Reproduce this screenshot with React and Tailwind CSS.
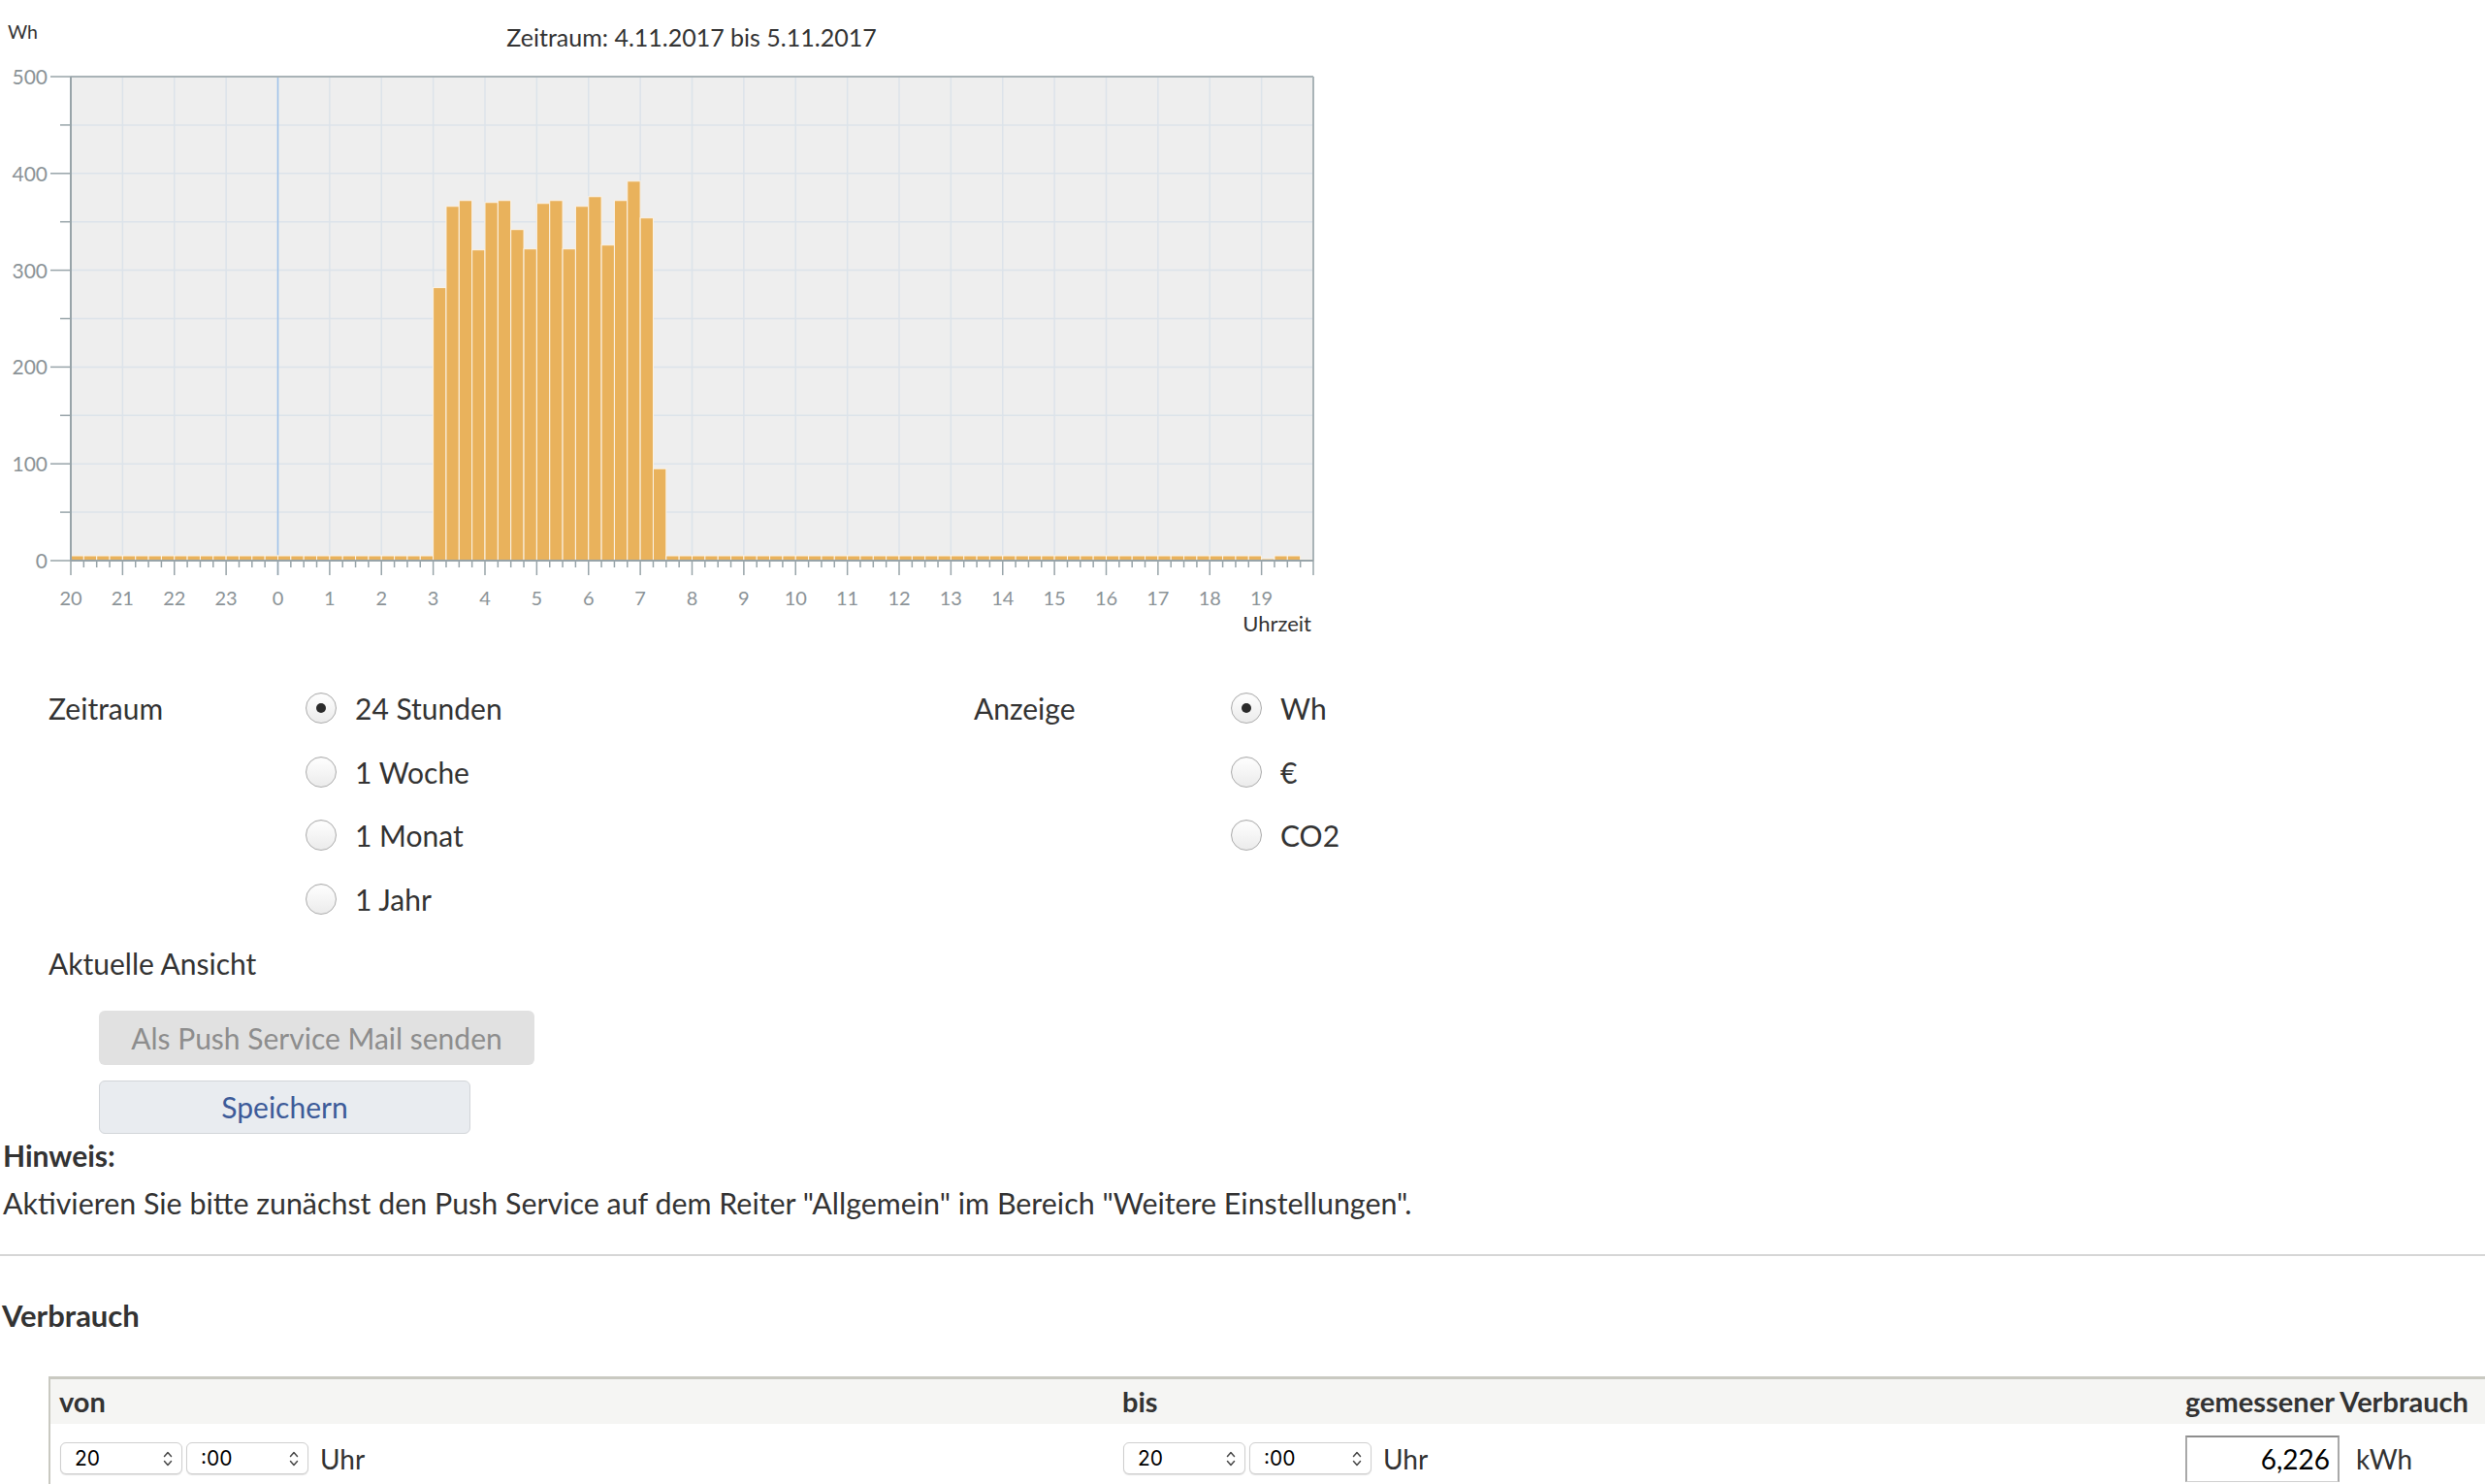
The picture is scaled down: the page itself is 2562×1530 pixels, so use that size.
import React from "react";

// Plot geometry of the consumption chart (SVG user units = px)
const X0 = 73;
const X1 = 1354;
const Y0 = 79;
const Y1 = 578;
const HOURS = [20, 21, 22, 23, 0, 1, 2, 3, 4, 5, 6, 7, 8, 9, 10, 11, 12, 13, 14, 15, 16, 17, 18, 19];
const HOUR_W = (X1 - X0) / 24;
const BAR_W = HOUR_W / 4;
const PY = (Y1 - Y0) / 500;

// Quarter-hour values in Wh, starting at 20:00
const VALUES = (() => {
  const v = Array(96).fill(5);
  const peak = [282, 366, 372, 321, 370, 372, 342, 322, 369, 372, 322, 366, 376, 326, 372, 392, 354, 95];
  peak.forEach((p, i) => {
    v[28 + i] = p;
  });
  v[92] = 2;
  v[95] = 1;
  return v;
})();

function Chart() {
  const yTicks = [];
  for (let w = 0; w <= 500; w += 50) yTicks.push(w);
  const xMinor = [];
  for (let q = 0; q <= 96; q++) xMinor.push(q);

  return (
    <svg width="1380" height="697" className="block" style={{ fontFamily: "Lato, sans-serif" }}>
      <text x="8" y="40" fontSize="19.5" fill="#333">Wh</text>
      <text x="713" y="48" fontSize="25" fill="#333" textAnchor="middle">
        Zeitraum: 4.11.2017 bis 5.11.2017
      </text>

      {/* plot background */}
      <rect x={X0} y={Y0} width={X1 - X0} height={Y1 - Y0} fill="#eeeeee" />

      {/* horizontal grid */}
      {yTicks.map((w) => (
        <line key={"hg" + w} x1={X0} x2={X1} y1={Y1 - w * PY} y2={Y1 - w * PY} stroke="#dce3ea" strokeWidth="1.5" />
      ))}
      {/* vertical grid per hour */}
      {HOURS.map((h, i) => (
        <line key={"vg" + i} x1={X0 + i * HOUR_W} x2={X0 + i * HOUR_W} y1={Y0} y2={Y1} stroke="#dce3ea" strokeWidth="1.5" />
      ))}
      {/* midnight marker */}
      <line x1={X0 + 4 * HOUR_W} x2={X0 + 4 * HOUR_W} y1={Y0} y2={593} stroke="#9fc2ea" strokeWidth="1.5" />

      {/* columns */}
      {VALUES.map((v, i) => {
        const h = v * PY;
        return (
          <rect
            key={"b" + i}
            x={X0 + i * BAR_W}
            y={Y1 - h}
            width={BAR_W}
            height={h}
            fill="#e9b25c"
            stroke="#fbf3e6"
            strokeWidth="1"
          />
        );
      })}

      {/* frame */}
      <line x1={X0} x2={X1} y1={Y0} y2={Y0} stroke="#a9b3b7" strokeWidth="2" />
      <line x1={X1} x2={X1} y1={Y0} y2={Y1} stroke="#a9b3b7" strokeWidth="2" />
      <line x1={X0} x2={X0} y1={Y0} y2={Y1} stroke="#98a4a9" strokeWidth="2" />
      <line x1={X0} x2={X1} y1={Y1} y2={Y1} stroke="#98a4a9" strokeWidth="2" />

      {/* y ticks and labels */}
      {yTicks.map((w) => (
        <line
          key={"yt" + w}
          x1={w % 100 === 0 ? 52 : 62}
          x2={X0}
          y1={Y1 - w * PY}
          y2={Y1 - w * PY}
          stroke="#98a4a9"
          strokeWidth="1.5"
        />
      ))}
      {[0, 100, 200, 300, 400, 500].map((w) => (
        <text key={"yl" + w} x="49" y={Y1 - w * PY + 8} fontSize="21" fill="#8b9397" textAnchor="end">
          {w}
        </text>
      ))}

      {/* x ticks */}
      {xMinor.map((q) => (
        <line
          key={"xt" + q}
          x1={X0 + q * BAR_W}
          x2={X0 + q * BAR_W}
          y1={Y1}
          y2={q % 4 === 0 ? 593 : 585}
          stroke="#98a4a9"
          strokeWidth="1.5"
        />
      ))}
      {HOURS.map((h, i) => (
        <text key={"xl" + i} x={X0 + i * HOUR_W} y="624" fontSize="20" fill="#8b9397" textAnchor="middle">
          {h}
        </text>
      ))}
      <text x="1352" y="651" fontSize="22" fill="#333" textAnchor="end">Uhrzeit</text>
    </svg>
  );
}

function Radio({ checked, label }) {
  return (
    <div className="flex items-center gap-[19px]">
      <span className="flex h-[32px] w-[32px] items-center justify-center rounded-full border border-[#acacac] bg-linear-to-b from-white to-[#ebebeb] shadow-[inset_0_1px_1px_rgba(0,0,0,0.06)]">
        {checked && <span className="h-[10px] w-[10px] rounded-full bg-[#2a2a2a]" />}
      </span>
      <span>{label}</span>
    </div>
  );
}

function Stepper() {
  return (
    <svg width="10" height="18" viewBox="0 0 10 18" className="block">
      <path d="M1.5 6.5 L5 2.5 L8.5 6.5" fill="none" stroke="#4a4a4a" strokeWidth="1.5" strokeLinecap="round" strokeLinejoin="round" />
      <path d="M1.5 11.5 L5 15.5 L8.5 11.5" fill="none" stroke="#4a4a4a" strokeWidth="1.5" strokeLinecap="round" strokeLinejoin="round" />
    </svg>
  );
}

function SelectBox({ value }) {
  return (
    <div className="flex h-[33px] w-[126px] items-center justify-between rounded-[6px] border border-[#cfcfcf] bg-white pl-[14px] pr-[9px] font-['Inter',sans-serif] text-[21px] text-black shadow-[0_1px_1px_rgba(0,0,0,0.12)]">
      <span>{value}</span>
      <Stepper />
    </div>
  );
}

function TimePicker() {
  return (
    <div className="flex items-center">
      <SelectBox value="20" />
      <div className="ml-[4px]">
        <SelectBox value=":00" />
      </div>
      <span className="ml-[12px]">Uhr</span>
    </div>
  );
}

export default function App() {
  return (
    <div className="h-[1530px] w-[2562px] overflow-hidden bg-white font-['Lato',sans-serif] text-[30px] leading-[44px] text-[#333]">
      <Chart />

      {/* view settings */}
      <div className="grid auto-rows-[65.8px] grid-cols-[265px_689px_265px_auto] items-center pl-[50px]">
        <span>Zeitraum</span>
        <Radio checked label="24 Stunden" />
        <span>Anzeige</span>
        <Radio checked label="Wh" />

        <span />
        <Radio label="1 Woche" />
        <span />
        <Radio label="€" />

        <span />
        <Radio label="1 Monat" />
        <span />
        <Radio label="CO2" />

        <span />
        <Radio label="1 Jahr" />
        <span />
        <span />

        <span className="col-span-4">Aktuelle Ansicht</span>
      </div>

      <div className="mt-[16px] flex flex-col items-start gap-[16px] pl-[102px]">
        <button className="h-[56px] w-[449px] rounded-[6px] bg-[#e1e1e1] text-[30px] text-[#8d8d8d]">
          Als Push Service Mail senden
        </button>
        <button className="h-[55px] w-[383px] rounded-[6px] border border-[#d2d5d9] bg-[#e9ecf0] text-[30px] text-[#3d5b99]">
          Speichern
        </button>
      </div>

      <div className="pl-[3px] font-bold">Hinweis:</div>
      <p className="mt-[5px] pl-[3px] text-[30.4px]">
        Aktivieren Sie bitte zunächst den Push Service auf dem Reiter "Allgemein" im Bereich "Weitere Einstellungen".
      </p>

      <hr className="mt-[31px] border-t-2 border-[#d6d6d6]" />

      <h3 className="mt-[39px] pl-[2px] text-[31px] font-bold">Verbrauch</h3>

      {/* consumption table */}
      <div className="ml-[50px] mt-[41px] border-l-2 border-t-[3px] border-[#c9c9c1] text-[28px]">
        <div className="grid h-[46px] grid-cols-[1096px_1096px_1fr] items-center bg-[#f5f5f3] text-[29px] font-bold leading-[46px]">
          <span className="pl-[9px]">von</span>
          <span className="pl-[9px]">bis</span>
          <span className="pl-[9px]">gemessener Verbrauch</span>
        </div>
        <div className="grid h-[72px] grid-cols-[1096px_1096px_1fr] items-center">
          <div className="pl-[10px]">
            <TimePicker />
          </div>
          <div className="pl-[10px]">
            <TimePicker />
          </div>
          <div className="flex items-center pl-[9px]">
            <div className="flex h-[48px] w-[159px] items-center justify-end border-x-2 border-t-2 border-b border-x-[#a9a9a9] border-t-[#8e8e8e] border-b-[#d0d0d0] pr-[8px] text-[28px] text-black">
              6,226
            </div>
            <span className="ml-[17px]">kWh</span>
          </div>
        </div>
      </div>
    </div>
  );
}
